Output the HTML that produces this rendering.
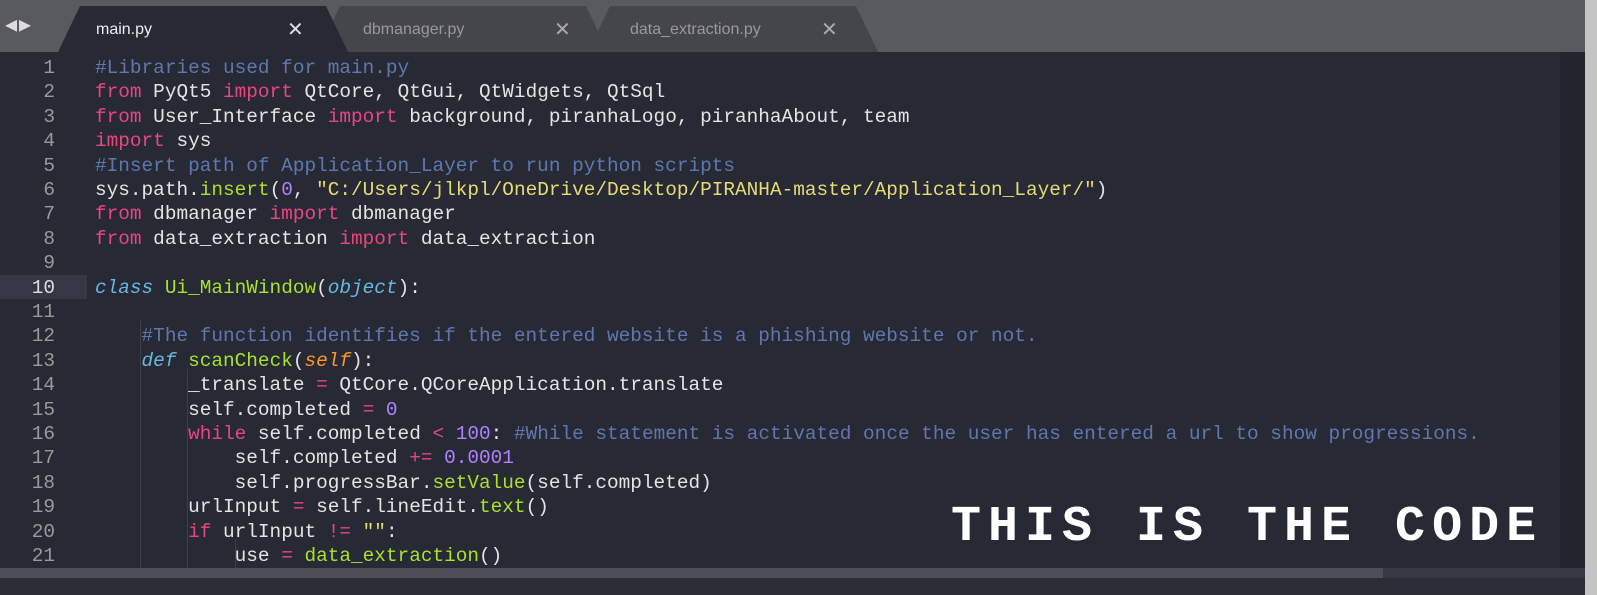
<!DOCTYPE html><html><head><style>
body{margin:0;width:1597px;height:595px;overflow:hidden;background:#272935;font-family:"Liberation Mono",monospace;position:relative}
#tabbar{position:absolute;left:0;top:0;width:1597px;height:52px;background:#595a60}
.tab{position:absolute;top:6px;height:46px;font-family:"Liberation Sans",sans-serif;font-size:16px}
.tab .bg{position:absolute;inset:0;clip-path:polygon(0 100%,22px 0,calc(100% - 22px) 0,100% 100%)}
.tab span{position:absolute;top:15px}
.tab .x{font-size:20px;top:11px}
#code{position:absolute;left:0;top:56px;font-size:19.4px;line-height:24.4px;color:#e4e4e0;white-space:pre}
.ln{position:absolute;left:0;width:55px;text-align:right;color:#9a9a98}
.l{position:absolute;left:95px}
.c{color:#5e78ad}.k{color:#e9467e}.s{color:#e6db74}.f{color:#a6e22e}.n{color:#ae81ff}.d{color:#66b8e0;font-style:italic}.p{color:#fd971f;font-style:italic}
</style></head><body>
<div id="tabbar">
<div style="position:absolute;left:5px;top:12px;color:#ddd;font-size:20px;letter-spacing:2px">◀▶</div>
<div class="tab" style="left:318px;width:290px"><div class="bg" style="background:#45464c"></div><span style="left:45px;color:#999">dbmanager.py</span><span class="x" style="left:236px;color:#aaa">✕</span></div>
<div class="tab" style="left:588px;width:290px"><div class="bg" style="background:#45464c"></div><span style="left:42px;color:#999">data_extraction.py</span><span class="x" style="left:233px;color:#aaa">✕</span></div>
<div class="tab" style="left:58px;width:290px"><div class="bg" style="background:#272935"></div><span style="left:38px;color:#eee">main.py</span><span class="x" style="left:229px;color:#ddd">✕</span></div>
</div>
<div style="position:absolute;left:0;top:275px;width:87px;height:24px;background:#353744"></div>
<div style="position:absolute;left:140px;top:320px;width:1px;height:250px;background:#3c3e4a"></div>
<div style="position:absolute;left:187px;top:369px;width:1px;height:200px;background:#3c3e4a"></div>
<div style="position:absolute;left:235px;top:540px;width:1px;height:30px;background:#3c3e4a"></div>
<div id="code">
<div class="ln" style="top:0">1</div><div class="l" style="top:0"><span class="c">#Libraries used for main.py</span></div>
<div class="ln" style="top:24.4px">2</div><div class="l" style="top:24.4px"><span class="k">from</span> PyQt5 <span class="k">import</span> QtCore, QtGui, QtWidgets, QtSql</div>
<div class="ln" style="top:48.8px">3</div><div class="l" style="top:48.8px"><span class="k">from</span> User_Interface <span class="k">import</span> background, piranhaLogo, piranhaAbout, team</div>
<div class="ln" style="top:73.2px">4</div><div class="l" style="top:73.2px"><span class="k">import</span> sys</div>
<div class="ln" style="top:97.6px">5</div><div class="l" style="top:97.6px"><span class="c">#Insert path of Application_Layer to run python scripts</span></div>
<div class="ln" style="top:122px">6</div><div class="l" style="top:122px">sys.path.<span class="f">insert</span>(<span class="n">0</span>, <span class="s">"C:/Users/jlkpl/OneDrive/Desktop/PIRANHA-master/Application_Layer/"</span>)</div>
<div class="ln" style="top:146.4px">7</div><div class="l" style="top:146.4px"><span class="k">from</span> dbmanager <span class="k">import</span> dbmanager</div>
<div class="ln" style="top:170.8px">8</div><div class="l" style="top:170.8px"><span class="k">from</span> data_extraction <span class="k">import</span> data_extraction</div>
<div class="ln" style="top:195.2px">9</div>
<div class="ln" style="top:219.6px;color:#ddd">10</div><div class="l" style="top:219.6px"><span class="d">class</span> <span class="f">Ui_MainWindow</span>(<span class="d">object</span>):</div>
<div class="ln" style="top:244px">11</div>
<div class="ln" style="top:268.4px">12</div><div class="l" style="top:268.4px">    <span class="c">#The function identifies if the entered website is a phishing website or not.</span></div>
<div class="ln" style="top:292.8px">13</div><div class="l" style="top:292.8px">    <span class="d">def</span> <span class="f">scanCheck</span>(<span class="p">self</span>):</div>
<div class="ln" style="top:317.2px">14</div><div class="l" style="top:317.2px">        _translate <span class="k">=</span> QtCore.QCoreApplication.translate</div>
<div class="ln" style="top:341.6px">15</div><div class="l" style="top:341.6px">        self.completed <span class="k">=</span> <span class="n">0</span></div>
<div class="ln" style="top:366px">16</div><div class="l" style="top:366px">        <span class="k">while</span> self.completed <span class="k">&lt;</span> <span class="n">100</span>: <span class="c">#While statement is activated once the user has entered a url to show progressions.</span></div>
<div class="ln" style="top:390.4px">17</div><div class="l" style="top:390.4px">            self.completed <span class="k">+=</span> <span class="n">0.0001</span></div>
<div class="ln" style="top:414.8px">18</div><div class="l" style="top:414.8px">            self.progressBar.<span class="f">setValue</span>(self.completed)</div>
<div class="ln" style="top:439.2px">19</div><div class="l" style="top:439.2px">        urlInput <span class="k">=</span> self.lineEdit.<span class="f">text</span>()</div>
<div class="ln" style="top:463.6px">20</div><div class="l" style="top:463.6px">        <span class="k">if</span> urlInput <span class="k">!=</span> <span class="s">""</span>:</div>
<div class="ln" style="top:488px">21</div><div class="l" style="top:488px">            use <span class="k">=</span> <span class="f">data_extraction</span>()</div>
</div>
<div style="position:absolute;left:1560px;top:52px;width:25px;height:516px;background:#22242e"></div>
<div style="position:absolute;left:1585px;top:0;width:12px;height:595px;background:#c4c4c4"></div>
<div style="position:absolute;left:0;top:568px;width:1585px;height:10px;background:#363843"></div>
<div style="position:absolute;left:0;top:568px;width:1383px;height:10px;background:#4c4e58"></div>
<div style="position:absolute;left:0;top:578px;width:1585px;height:17px;background:#2a2c36"></div>
<div style="position:absolute;left:951px;top:503px;font-family:'Liberation Mono',monospace;font-weight:bold;font-size:50px;line-height:50px;color:#fff;letter-spacing:7px;white-space:pre">THIS IS THE CODE</div>
</body></html>
